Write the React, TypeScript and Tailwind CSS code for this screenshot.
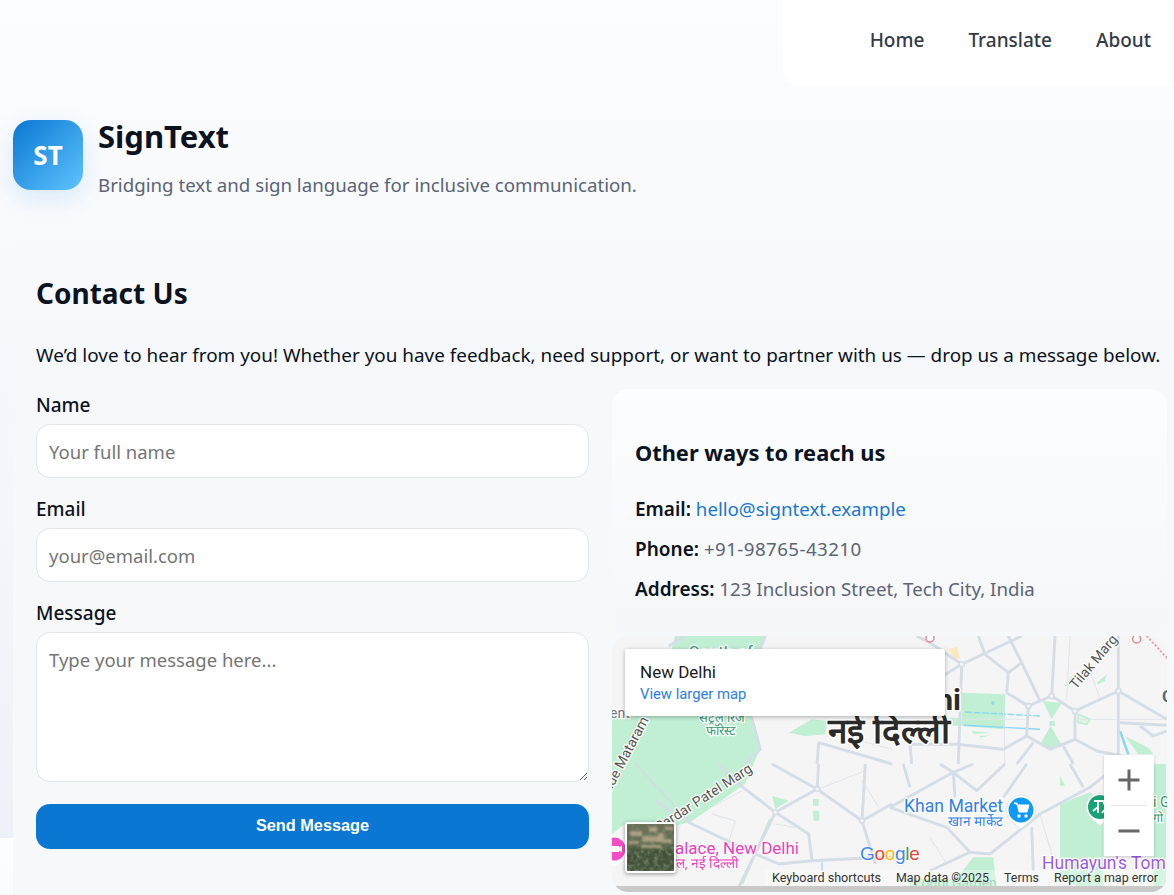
import React from "react";

type Pt = [number, number];
const Q: Record<string, Pt> = { a: [0, 0], b: [278, 0], c: [0, 128], d: [278, 128] };
const path = (q: string, pts: Pt[]) =>
  "M" + pts.map(([x, y]) => `${(Q[q][0] + x / 3).toFixed(1)} ${(Q[q][1] + y / 3).toFixed(1)}`).join("L");

const wide: [string, Pt[]][] = [
  ["b", [[415,210],[485,180],[555,225],[555,310],[480,340],[410,300],[415,210]]],
  ["b", [[485,180],[495,0]]],
  ["b", [[415,210],[350,170],[355,110],[395,80],[355,0]]],
  ["b", [[395,80],[450,195]]],
  ["b", [[555,225],[685,165],[830,250]]],
  ["b", [[685,0],[685,384]]],
  ["b", [[555,310],[620,345],[700,360]]],
  ["b", [[410,300],[340,340],[200,325],[60,325]]],
  ["b", [[430,320],[380,384]]],
  ["b", [[520,330],[550,384]]],
  ["b", [[215,85],[395,0]]],
  ["b", [[215,85],[120,20],[80,0]]],
  ["b", [[215,85],[205,384]]],
  ["b", [[215,85],[150,125]]],
  ["b", [[265,0],[285,55],[355,110]]],
  ["b", [[690,260],[830,268]]],
  ["b", [[750,270],[790,300],[830,285]]],
  ["b", [[60,325],[65,384]]],
  ["a", [[460,0],[425,90],[418,240],[445,340],[400,384]]],
  ["a", [[170,30],[220,0]]],
  ["a", [[620,320],[840,384]]],
  ["a", [[620,320],[615,384]]],
  ["c", [[480,0],[615,75],[750,170]]],
  ["c", [[615,75],[490,145],[380,60],[320,0]]],
  ["c", [[615,75],[620,0]]],
  ["c", [[750,170],[760,0]]],
  ["c", [[750,170],[840,120]]],
  ["c", [[750,170],[790,300]]],
  ["c", [[490,145],[590,210],[600,290],[500,300],[430,270],[240,180],[130,110]]],
  ["c", [[600,290],[700,285],[840,280]]],
  ["c", [[490,145],[380,370]]],
  ["d", [[0,130],[190,25],[250,0]]],
  ["d", [[190,25],[150,0]]],
  ["d", [[190,25],[195,100]]],
  ["d", [[190,25],[260,80],[345,0]]],
  ["d", [[410,0],[340,100]]],
  ["d", [[300,270],[450,150],[600,70],[650,30]]],
  ["d", [[240,265],[170,190],[0,130]]],
  ["d", [[240,265],[120,320]]],
  ["d", [[240,265],[300,270]]],
  ["d", [[580,70],[540,0]]],
  ["d", [[425,190],[430,320]]],
  ["d", [[40,0],[60,70]]],
];

const thin: [string, Pt[]][] = [
  ["b", [[540,0],[530,190]]],
  ["b", [[590,80],[620,160],[630,190]]],
  ["b", [[0,130],[60,100]]],
  ["b", [[340,170],[345,384]]],
  ["b", [[220,250],[400,250]]],
  ["b", [[560,250],[830,250]]],
  ["c", [[300,130],[390,80]]],
  ["c", [[300,150],[370,170],[330,300]]],
  ["c", [[620,75],[760,20]]],
  ["c", [[750,50],[800,130]]],
  ["c", [[490,180],[550,190]]],
  ["d", [[120,220],[170,300]]],
  ["d", [[450,150],[500,320]]],
  ["a", [[690,300],[840,340]]],
];

const green: [string, Pt[]][] = [
  ["a", [[530,290],[600,250],[645,255],[640,295],[580,300]]],
  ["b", [[215,170],[345,175],[345,280],[215,270]]],
  ["b", [[160,245],[215,245],[215,270],[160,268]]],
  ["b", [[458,195],[515,200],[485,250]]],
  ["b", [[482,270],[515,328],[480,340],[450,325]]],
  ["b", [[478,255],[495,255],[495,270],[478,270]]],
  ["b", [[525,150],[545,120],[550,125],[537,150]]],
  ["b", [[620,140],[650,115],[645,135],[625,145]]],
  ["b", [[245,285],[300,290],[250,294]]],
  ["b", [[270,300],[300,298],[270,305]]],
  ["b", [[705,300],[775,335],[790,355],[745,355]]],
  ["c", [[480,95],[530,110],[490,135]]],
  ["c", [[603,105],[620,105],[620,125],[603,125]]],
  ["c", [[603,140],[622,140],[622,170],[605,170]]],
  ["d", [[510,120],[600,85],[640,120],[640,280],[510,280]]],
  ["d", [[510,280],[640,280],[640,366],[560,366],[510,330]]],
  ["d", [[790,0],[828,0],[828,366],[790,366]]],
  ["d", [[210,330],[250,280],[310,280],[320,366],[200,366]]],
  ["d", [[510,35],[525,65],[510,65]]],
  ["d", [[60,366],[200,366],[200,345],[60,345]]],
];

function Satellite() {
  const tan: [number, number, number, number][] = [
    [3, 7, 12, 5], [15, 12, 18, 6], [2, 17, 10, 3], [22, 3, 8, 5], [31, 9, 6, 9], [14, 21, 20, 3], [36, 15, 9, 4], [38, 3, 8, 3],
  ];
  return (
    <svg viewBox="0 0 47 47" className="w-full h-full block" preserveAspectRatio="none" aria-hidden="true">
      <defs>
        <linearGradient id="satBase" x1="0" y1="0" x2="0" y2="1">
          <stop offset="0" stopColor="#6e7058" />
          <stop offset="0.45" stopColor="#5c6849" />
          <stop offset="0.6" stopColor="#414f36" />
          <stop offset="1" stopColor="#46583f" />
        </linearGradient>
        <filter id="satNoise" x="0" y="0" width="100%" height="100%">
          <feTurbulence type="fractalNoise" baseFrequency="0.22" numOctaves="2" seed="11" />
          <feColorMatrix values="0 0 0 0 0.16  0 0 0 0 0.22  0 0 0 0 0.14  0 0 0 2.2 -0.9" />
        </filter>
        <filter id="satBlur"><feGaussianBlur stdDeviation="1" /></filter>
      </defs>
      <rect width="47" height="47" fill="url(#satBase)" />
      <rect width="47" height="47" filter="url(#satNoise)" />
      <g filter="url(#satBlur)">
        {tan.map((r, i) => (
          <rect key={i} x={r[0]} y={r[1]} width={r[2]} height={r[3]} fill="#b9aa8d" opacity="0.8" />
        ))}
      </g>
    </svg>
  );
}

const halo = { paintOrder: "stroke", stroke: "#fff", strokeWidth: 2.5, strokeLinejoin: "round" } as const;

function MapCanvas() {
  return (
    <svg viewBox="0 0 555 256" className="absolute inset-0 w-full h-full font-['Roboto',sans-serif]" aria-hidden="true">
      <rect width="555" height="256" fill="#f5f5f5" />
      <path d="M0 78L43 80L63 0L154 0L142 30L139 80L148 113L133 148L80 185L63 190L13 188L0 198Z" fill="#c0efd3" />
      {green.map(([q, p], i) => (
        <path key={i} d={path(q, p) + "Z"} fill="#c0efd3" />
      ))}
      <path d={path("b", [[565,235],[600,250],[590,265],[565,260]]) + "Z"} fill="#dff6e7" stroke="#bfeed0" strokeWidth="1.5" />
      <path d={path("b", [[225,228],[450,240]])} stroke="#8ad8f4" strokeWidth="1.4" fill="none" strokeDasharray="7 1.5" />
      <path d={path("b", [[222,268],[450,280]])} stroke="#8ad8f4" strokeWidth="1.4" fill="none" />
      <path d={path("b", [[690,285],[715,355]])} stroke="#8ad8f4" strokeWidth="2.6" fill="none" />
      <path d={path("c", [[630,295],[630,320]])} stroke="#8ad8f4" strokeWidth="1.2" fill="none" />
      <circle cx={278 + 308 / 3} cy={67} r="1.8" fill="#8ad8f4" />
      <path d={path("b", [[175,40],[200,32],[210,65],[195,70]]) + "Z"} fill="#fbe9c0" />
      {thin.map(([q, p], i) => (
        <path key={i} d={path(q, p)} fill="none" stroke="#e1e5ea" strokeWidth="1" />
      ))}
      <path d={path("c", [[475,165],[390,360]])} stroke="#c0efd3" strokeWidth="2.5" fill="none" />
      <path d={path("c", [[70,0],[240,180]])} stroke="#d3dce5" strokeWidth="1.6" fill="none" />
      {wide.map(([q, p], i) => (
        <path key={i} d={path(q, p)} fill="none" stroke="#d5dde6" strokeWidth="2.9" strokeLinejoin="round" />
      ))}
      {([[415,210],[485,180],[555,225],[215,85],[685,165]] as Pt[]).map((p, i) => (
        <circle key={i} cx={278 + p[0] / 3} cy={p[1] / 3} r="2.6" fill="#f5f5f5" stroke="#d5dde6" strokeWidth="1.6" />
      ))}
      {([[615,75],[490,145],[750,170]] as Pt[]).map((p, i) => (
        <circle key={i} cx={p[0] / 3} cy={128 + p[1] / 3} r="2.4" fill="#f5f5f5" stroke="#d5dde6" strokeWidth="1.6" />
      ))}
      <circle cx={278 + 120 / 3} cy={2} r="4" fill="#fff" stroke="#e8808a" strokeWidth="1.4" />
      <circle cx={278 + 740 / 3} cy={3} r="4" fill="#fff" stroke="#e8808a" strokeWidth="1.4" />
      <path d={path("b", [[770,0],[835,70]])} stroke="#ee9aa0" strokeWidth="2" strokeDasharray="2 2" fill="none" />
      <text x="77" y="22" fontSize="17" fill="#3a9a78" style={halo}>South of</text>
      <text x="87" y="86" fontSize="13" fill="#3a9a78" style={halo}>सेंट्रल रिज</text>
      <text x="94" y="99" fontSize="13" fill="#3a9a78" style={halo}>फॉरेस्ट</text>
      <text x="-2" y="82" fontSize="14" fill="#6f7780" style={halo}>ent</text>
      <text x="349" y="74" fontSize="30" fontWeight="700" fill="#2b2b2b" textAnchor="end" style={{ ...halo, strokeWidth: 3 }}>New Delhi</text>
      <text x="216" y="107" fontSize="35" fontWeight="700" fill="#2b2b2b" style={{ ...halo, strokeWidth: 3 }}>नई दिल्ली</text>
      <text transform="translate(464 54) rotate(-50)" fontSize="14" fill="#555" style={halo}>Tilak Marg</text>
      <text transform="translate(37 84) rotate(-62)" fontSize="14" textAnchor="end" fill="#555" style={halo}>Vande Mataram</text>
      <text transform="translate(141 135) rotate(-33)" fontSize="14" textAnchor="end" fill="#555" style={halo}>Sardar Patel Marg</text>
      <text x="292" y="176" fontSize="17.6" fill="#2f80ed" style={halo}>Khan Market</text>
      <text x="336" y="190" fontSize="13.5" fill="#2f80ed" style={halo}>खान मार्केट</text>
      <text x="187" y="218" fontSize="17" textAnchor="end" fill="#ef3cbd" style={halo}>Palace, New Delhi</text>
      <text x="127" y="232" fontSize="13.5" textAnchor="end" fill="#ef3cbd" style={halo}>महल, नई दिल्ली</text>
      <text x="430" y="233" fontSize="17.5" fill="#9b5be0" style={halo}>Humayun's Tom</text>
      <text x="302" y="252" fontSize="14" fill="#7cbf99">Lodhi Garden</text>
      <text x="541" y="171" fontSize="14" fill="#2f9a70" style={halo}>i G</text>
      <text x="541" y="186" fontSize="12" fill="#2f9a70" style={halo}>गो</text>
      <text x="550" y="66" fontSize="17" fontWeight="700" fill="#4d6a84" style={halo}>C</text>
      <g transform="translate(2 213)">
        <path d="M0 -14a14 14 0 0 1 14 14c0 9-9 14-14 18c-5-4-14-9-14-18a14 14 0 0 1 14-14z" fill="#fff" />
        <circle r="11.5" fill="#f44dc6" />
        <rect x="-2" y="-3" width="7" height="6" fill="#fff" />
        <path d="M5 -1.5l3-2v7l-3-2z" fill="#fff" />
      </g>
      <g transform="translate(409 174)">
        <path d="M0 -15a15 15 0 0 1 15 15c0 10-10 14-15 19c-5-5-15-9-15-19a15 15 0 0 1 15-15z" fill="#fff" stroke="#d6d6d6" strokeWidth="0.6" />
        <circle r="12.5" fill="#0f9bf5" />
        <path d="M-7 -7h3l2 9h8l2-7h-11z" fill="#fff" stroke="#fff" strokeWidth="1" />
        <circle cx="-2" cy="6" r="1.7" fill="#fff" />
        <circle cx="5" cy="6" r="1.7" fill="#fff" />
      </g>
      <g transform="translate(488 171)">
        <path d="M0 -14a14 14 0 0 1 14 14c0 9-9 14-14 19c-5-5-14-10-14-19a14 14 0 0 1 14-14z" fill="#fff" stroke="#d6d6d6" strokeWidth="0.6" />
        <circle r="12" fill="#19a273" />
        <path d="M-6 -6h12M-2 -6v12M3 -6l3 7l-4 5M-2 0l-5 4" stroke="#fff" strokeWidth="1.8" fill="none" />
      </g>
      <text x="248" y="224" fontSize="19" letterSpacing="-0.3" fontFamily="'Liberation Sans',sans-serif" style={{ ...halo, strokeWidth: 1.5 }}>
        <tspan fill="#4285f4">G</tspan>
        <tspan fill="#ea4335">o</tspan>
        <tspan fill="#fbbc05">o</tspan>
        <tspan fill="#4285f4">g</tspan>
        <tspan fill="#34a853">l</tspan>
        <tspan fill="#ea4335">e</tspan>
      </text>
      <rect x="153" y="234" width="402" height="16" fill="#fff" opacity="0.35" />
      <text x="160" y="246" fontSize="12" fill="#333" textLength="109" lengthAdjust="spacingAndGlyphs">Keyboard shortcuts</text>
      <text x="284" y="246" fontSize="12" fill="#333" textLength="93" lengthAdjust="spacingAndGlyphs">Map data ©2025</text>
      <text x="392" y="246" fontSize="12" fill="#333" textLength="35" lengthAdjust="spacingAndGlyphs">Terms</text>
      <text x="442" y="246" fontSize="12" fill="#333" textLength="104" lengthAdjust="spacingAndGlyphs">Report a map error</text>
      <rect y="250" width="555" height="6" fill="#c9c9c9" />
    </svg>
  );
}

function MapEmbed() {
  return (
    <div className="relative h-[256px] rounded-2xl overflow-hidden">
      <MapCanvas />
      <div className="absolute left-[13px] top-[13px] w-[320px] h-[67px] bg-white rounded-[2px] shadow-[0_1px_4px_rgba(0,0,0,0.3)] pl-[15px] pt-[12px] font-['Roboto',sans-serif]">
        <div className="text-[17px] leading-[22px] font-normal text-[#1a1a1a]">New Delhi</div>
        <div className="text-[14.8px] leading-[22px] text-[#2b7de9]">View larger map</div>
      </div>
      <div className="absolute right-[13px] top-[119px] w-[50px] h-[101px] bg-white flex flex-col items-center shadow-[0_1px_3px_rgba(0,0,0,0.2)]">
        <div className="h-[50px] w-full flex items-center justify-center">
          <svg width="24" height="24" viewBox="0 0 24 24" aria-hidden="true">
            <path d="M12 1.5v21M1.5 12h21" stroke="#666" strokeWidth="3" />
          </svg>
        </div>
        <div className="w-[36px] h-px bg-[#e6e6e6]" />
        <div className="flex-1 w-full flex items-center justify-center">
          <svg width="24" height="24" viewBox="0 0 24 24" aria-hidden="true">
            <path d="M1.5 12h21" stroke="#666" strokeWidth="3" />
          </svg>
        </div>
      </div>
      <div className="absolute left-[13px] top-[186px] w-[51px] h-[51px] bg-white border-2 border-white rounded-[3px] overflow-hidden shadow-[0_1px_4px_rgba(0,0,0,0.4)]">
        <Satellite />
      </div>
    </div>
  );
}

const labelCls = "block text-[19px] leading-[24px] font-medium text-[#0b1220] mb-[7px]";
const fieldCls =
  "block w-full border border-[#e2e5ea] bg-white rounded-[14px] px-[12px] text-[18.5px] text-[#0b1220] placeholder:text-[#757575] outline-none";
const strongCls = "font-semibold text-[19px] text-[#0b1220]";

export default function App() {
  return (
    <div className="relative h-[895px] w-[1174px] overflow-hidden bg-[linear-gradient(180deg,#fcfdff,#edf2f8)] bg-size-[100%_838px] font-['Noto_Sans',sans-serif] text-[#0b1220]">
      <header className="flex justify-end h-[86px]">
        <nav className="w-[391px] bg-white rounded-bl-2xl flex items-center justify-end gap-[44px] pr-[23px] pb-[6px] text-[19px] font-medium text-[#333a45]">
          <a>Home</a>
          <a>Translate</a>
          <a>About</a>
        </nav>
      </header>
      <div className="flex pl-[13px] pt-[34px] gap-[15px] h-[130px]">
        <div className="w-[70px] h-[70px] rounded-[18px] bg-[linear-gradient(135deg,#0a78d2,#5ec3ff)] shadow-[0_8px_24px_rgba(10,120,210,0.14)] flex items-center justify-center text-white text-[26px] font-bold">
          ST
        </div>
        <div>
          <h1 className="text-[31px] leading-[32px] font-bold text-[#0b1220]">SignText</h1>
          <p className="mt-[20px] text-[18.7px] leading-[26px] text-[#5b6475]">Bridging text and sign language for inclusive communication.</p>
        </div>
      </div>
      <main className="ml-[13px] w-[1177px] h-[700px] rounded-2xl bg-[linear-gradient(180deg,rgba(249,251,254,0)_0%,#f6f8fa_30%)] px-[23px] pt-[57px]">
        <h2 className="text-[28px] leading-[40px] font-bold text-[#0b1220]">Contact Us</h2>
        <p className="mt-[29px] text-[18.9px] leading-[26px] text-[#0b1220] whitespace-nowrap">
          We’d love to hear from you! Whether you have feedback, need support, or want to partner with us — drop us a message below.
        </p>
        <div className="mt-[21px] flex gap-[23px]">
          <form className="w-[553px] pt-[4px]">
            <label className={labelCls}>Name</label>
            <input className={fieldCls + " h-[54px]"} placeholder="Your full name" />
            <label className={labelCls + " mt-[19px]"}>Email</label>
            <input className={fieldCls + " h-[54px]"} placeholder="your@email.com" />
            <label className={labelCls + " mt-[19px]"}>Message</label>
            <textarea className={fieldCls + " h-[150px] pt-[13px]"} placeholder="Type your message here..." />
            <button type="button" className="mt-[22px] w-full h-[45px] pb-[2px] rounded-[14px] bg-[#0a78d2] text-white text-[16.3px] font-bold font-['Liberation_Sans',sans-serif]">
              Send Message
            </button>
          </form>
          <div className="w-[555px]">
            <section className="h-[246px] rounded-2xl bg-[linear-gradient(180deg,#fcfdfe,#f5f7fa)] px-[23px] pt-[47px]">
              <h3 className="text-[21.8px] leading-[34px] font-bold text-[#0b1220]">Other ways to reach us</h3>
              <div className="mt-[26px] flex flex-col gap-[14px] text-[18.7px] leading-[26px] text-[#5b6475]">
                <p><b className={strongCls}>Email:</b> <a className="text-[#1976d2]">hello@signtext.example</a></p>
                <p><b className={strongCls}>Phone:</b> <span className="tracking-[0.45px]">+91-98765-43210</span></p>
                <p><b className={strongCls}>Address:</b> 123 Inclusion Street, Tech City, India</p>
              </div>
            </section>
            <div className="mt-px">
              <MapEmbed />
            </div>
          </div>
        </div>
      </main>
    </div>
  );
}
